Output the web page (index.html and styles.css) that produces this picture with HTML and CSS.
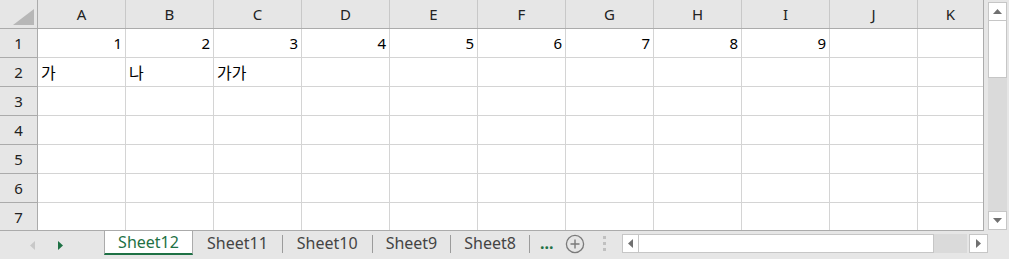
FILE: index.html
```html
<!DOCTYPE html>
<html>
<head>
<meta charset="utf-8">
<link rel="stylesheet" href="styles.css">
</head>
<body>
<div class="app">
  <div class="main">
    <div class="sheet">
      <div class="row head">
        <div class="rh corner"><span class="tri"></span></div>
        <div class="c">A</div><div class="c">B</div><div class="c">C</div><div class="c">D</div><div class="c">E</div><div class="c">F</div><div class="c">G</div><div class="c">H</div><div class="c">I</div><div class="c">J</div><div class="c last">K</div>
      </div>
      <div class="row">
        <div class="rh">1</div>
        <div class="c num">1</div><div class="c num">2</div><div class="c num">3</div><div class="c num">4</div><div class="c num">5</div><div class="c num">6</div><div class="c num">7</div><div class="c num">8</div><div class="c num">9</div><div class="c"></div><div class="c last"></div>
      </div>
      <div class="row">
        <div class="rh">2</div>
        <div class="c txt">가</div><div class="c txt">나</div><div class="c txt">가가</div><div class="c"></div><div class="c"></div><div class="c"></div><div class="c"></div><div class="c"></div><div class="c"></div><div class="c"></div><div class="c last"></div>
      </div>
      <div class="row"><div class="rh">3</div><div class="c"></div><div class="c"></div><div class="c"></div><div class="c"></div><div class="c"></div><div class="c"></div><div class="c"></div><div class="c"></div><div class="c"></div><div class="c"></div><div class="c last"></div></div>
      <div class="row"><div class="rh">4</div><div class="c"></div><div class="c"></div><div class="c"></div><div class="c"></div><div class="c"></div><div class="c"></div><div class="c"></div><div class="c"></div><div class="c"></div><div class="c"></div><div class="c last"></div></div>
      <div class="row"><div class="rh">5</div><div class="c"></div><div class="c"></div><div class="c"></div><div class="c"></div><div class="c"></div><div class="c"></div><div class="c"></div><div class="c"></div><div class="c"></div><div class="c"></div><div class="c last"></div></div>
      <div class="row"><div class="rh">6</div><div class="c"></div><div class="c"></div><div class="c"></div><div class="c"></div><div class="c"></div><div class="c"></div><div class="c"></div><div class="c"></div><div class="c"></div><div class="c"></div><div class="c last"></div></div>
      <div class="row"><div class="rh">7</div><div class="c"></div><div class="c"></div><div class="c"></div><div class="c"></div><div class="c"></div><div class="c"></div><div class="c"></div><div class="c"></div><div class="c"></div><div class="c"></div><div class="c last"></div></div>
    </div>
    <div class="vscroll">
      <div class="sbtn up"><svg width="9" height="5" viewBox="0 0 9 5"><path d="M0 5 L4.5 0 L9 5 Z" fill="#707070"/></svg></div>
      <div class="vthumb"></div>
      <div class="vtrack"></div>
      <div class="sbtn down"><svg width="9" height="5" viewBox="0 0 9 5"><path d="M0 0 L4.5 5 L9 0 Z" fill="#707070"/></svg></div>
    </div>
  </div>
  <div class="tabbar">
    <div class="nav">
      <svg class="navl" width="5" height="9" viewBox="0 0 5 9"><path d="M5 0 L0 4.5 L5 9 Z" fill="#c8c8c8"/></svg>
      <svg class="navr" width="5" height="9" viewBox="0 0 5 9"><path d="M0 0 L5 4.5 L0 9 Z" fill="#1e7145"/></svg>
    </div>
    <div class="tab active">Sheet12</div>
    <div class="tab">Sheet11</div>
    <div class="sep"></div>
    <div class="tab">Sheet10</div>
    <div class="sep"></div>
    <div class="tab narrow">Sheet9</div>
    <div class="sep"></div>
    <div class="tab narrow">Sheet8</div>
    <div class="sep"></div>
    <div class="more">...</div>
    <div class="add"><svg width="20" height="20" viewBox="0 0 20 20"><circle cx="10" cy="10" r="8.6" fill="none" stroke="#7a7a7a" stroke-width="1.3"/><path d="M10 5.5 V14.5 M5.5 10 H14.5" stroke="#7a7a7a" stroke-width="1.4"/></svg></div>
    <div class="grip"><i></i><i></i><i></i></div>
    <div class="hscroll">
      <div class="sbtn left"><svg width="5" height="9" viewBox="0 0 5 9"><path d="M5 0 L0 4.5 L5 9 Z" fill="#707070"/></svg></div>
      <div class="hthumb"></div>
      <div class="htrack"></div>
      <div class="sbtn right"><svg width="5" height="9" viewBox="0 0 5 9"><path d="M0 0 L5 4.5 L0 9 Z" fill="#707070"/></svg></div>
    </div>
  </div>
</div>
</body>
</html>
```

FILE: styles.css
```css
html, body {
  margin: 0;
  padding: 0;
}
body {
  width: 1009px;
  height: 259px;
  overflow: hidden;
  background: #e6e6e6;
  font-family: "Noto Sans", "Open Sans", "Noto Sans CJK KR", sans-serif;
  font-size: 15px;
  color: #000;
}
.app {
  display: flex;
  flex-direction: column;
  width: 1009px;
  height: 259px;
}
.main {
  display: flex;
  height: 231px;
}
.sheet {
  width: 983px;
  height: 230px;
  overflow: hidden;
  border-right: 1px solid #ababab;
  border-bottom: 1px solid #ababab;
  background: #fff;
}
.row {
  display: flex;
  height: 28px;
  border-bottom: 1px solid #d4d4d4;
}
.row.head {
  height: 28px;
  border-bottom: 1px solid #ababab;
  background: #e6e6e6;
}
.rh {
  flex: none;
  width: 37px;
  border-right: 1px solid #ababab;
  background: #e6e6e6;
  display: flex;
  align-items: center;
  justify-content: center;
  color: #222;
  font-family: "Noto Sans", sans-serif;
  font-size: 15px;
}
.row:not(.head) .rh {
  border-bottom: 1px solid #ababab;
  margin-bottom: -1px;
}
.corner {
  position: relative;
}
.tri {
  position: absolute;
  right: 3px;
  bottom: 3px;
  width: 0;
  height: 0;
  border-left: 21px solid transparent;
  border-bottom: 16px solid #b7b7b7;
}
.c {
  flex: none;
  width: 87px;
  border-right: 1px solid #d4d4d4;
  display: flex;
  align-items: center;
  white-space: nowrap;
  overflow: hidden;
}
.head .c {
  justify-content: center;
  color: #222;
  border-right-color: #c8c8c8;
}
.c.last {
  border-right: none;
  width: 65px;
}
.num {
  justify-content: flex-end;
  padding-right: 3px;
  width: 84px;
}
.txt {
  padding-left: 3px;
  width: 84px;
  font-family: "Noto Sans CJK KR", sans-serif;
  font-size: 16px;
}
.vscroll {
  flex: none;
  width: 25px;
  height: 230px;
  display: flex;
  flex-direction: column;
  align-items: center;
  padding-top: 2px;
  box-sizing: border-box;
  padding-left: 2px;
}
.sbtn {
  flex: none;
  box-sizing: border-box;
  width: 19px;
  height: 19px;
  background: #fff;
  border: 1px solid #c6c6c6;
  display: flex;
  align-items: center;
  justify-content: center;
}
.vthumb {
  flex: none;
  box-sizing: border-box;
  width: 19px;
  height: 57px;
  background: #fff;
  border: 1px solid #c6c6c6;
  border-top: none;
}
.vtrack {
  flex: 1;
  width: 19px;
  background: #dadada;
}
.tabbar {
  display: flex;
  align-items: flex-start;
  height: 28px;
  color: #444;
  font-size: 16px;
}
.nav {
  flex: none;
  width: 104px;
  height: 26px;
  display: flex;
  align-items: center;
  gap: 23px;
  padding-left: 30px;
  box-sizing: border-box;
  padding-top: 2px;
}
.tab {
  height: 24px;
  display: flex;
  align-items: center;
  padding: 0 14px;
}
.tab.narrow {
  padding: 0 13px;
}
.tab.active {
  width: 89px;
  box-sizing: border-box;
  justify-content: center;
  background: #fff;
  border-left: 1px solid #ababab;
  border-right: 1px solid #ababab;
  border-bottom: 2px solid #1e7145;
  color: #1e7145;
}
.sep {
  flex: none;
  width: 1px;
  height: 18px;
  margin-top: 4px;
  background: #9b9b9b;
}
.more {
  height: 24px;
  display: flex;
  align-items: center;
  padding: 0 10px 0 10px;
  color: #1e7145;
  font-weight: bold;
  letter-spacing: 0px;
}
.add {
  height: 24px;
  display: flex;
  align-items: center;
  padding-left: 2px;
  padding-top: 1px;
}
.grip {
  display: flex;
  flex-direction: column;
  gap: 3px;
  margin: 5px 0 0 18px;
}
.grip i {
  display: block;
  width: 3px;
  height: 3px;
  background: #c0c0c0;
}
.hscroll {
  display: flex;
  margin: 3px 0 0 16px;
  height: 19px;
}
.sbtn.left {
  width: 17px;
}
.hthumb {
  box-sizing: border-box;
  width: 295px;
  height: 19px;
  background: #fff;
  border: 1px solid #c6c6c6;
  border-left: none;
}
.htrack {
  width: 33px;
  height: 19px;
  background: #dadada;
}
.sbtn.right {
  margin-left: 2px;
}
```
